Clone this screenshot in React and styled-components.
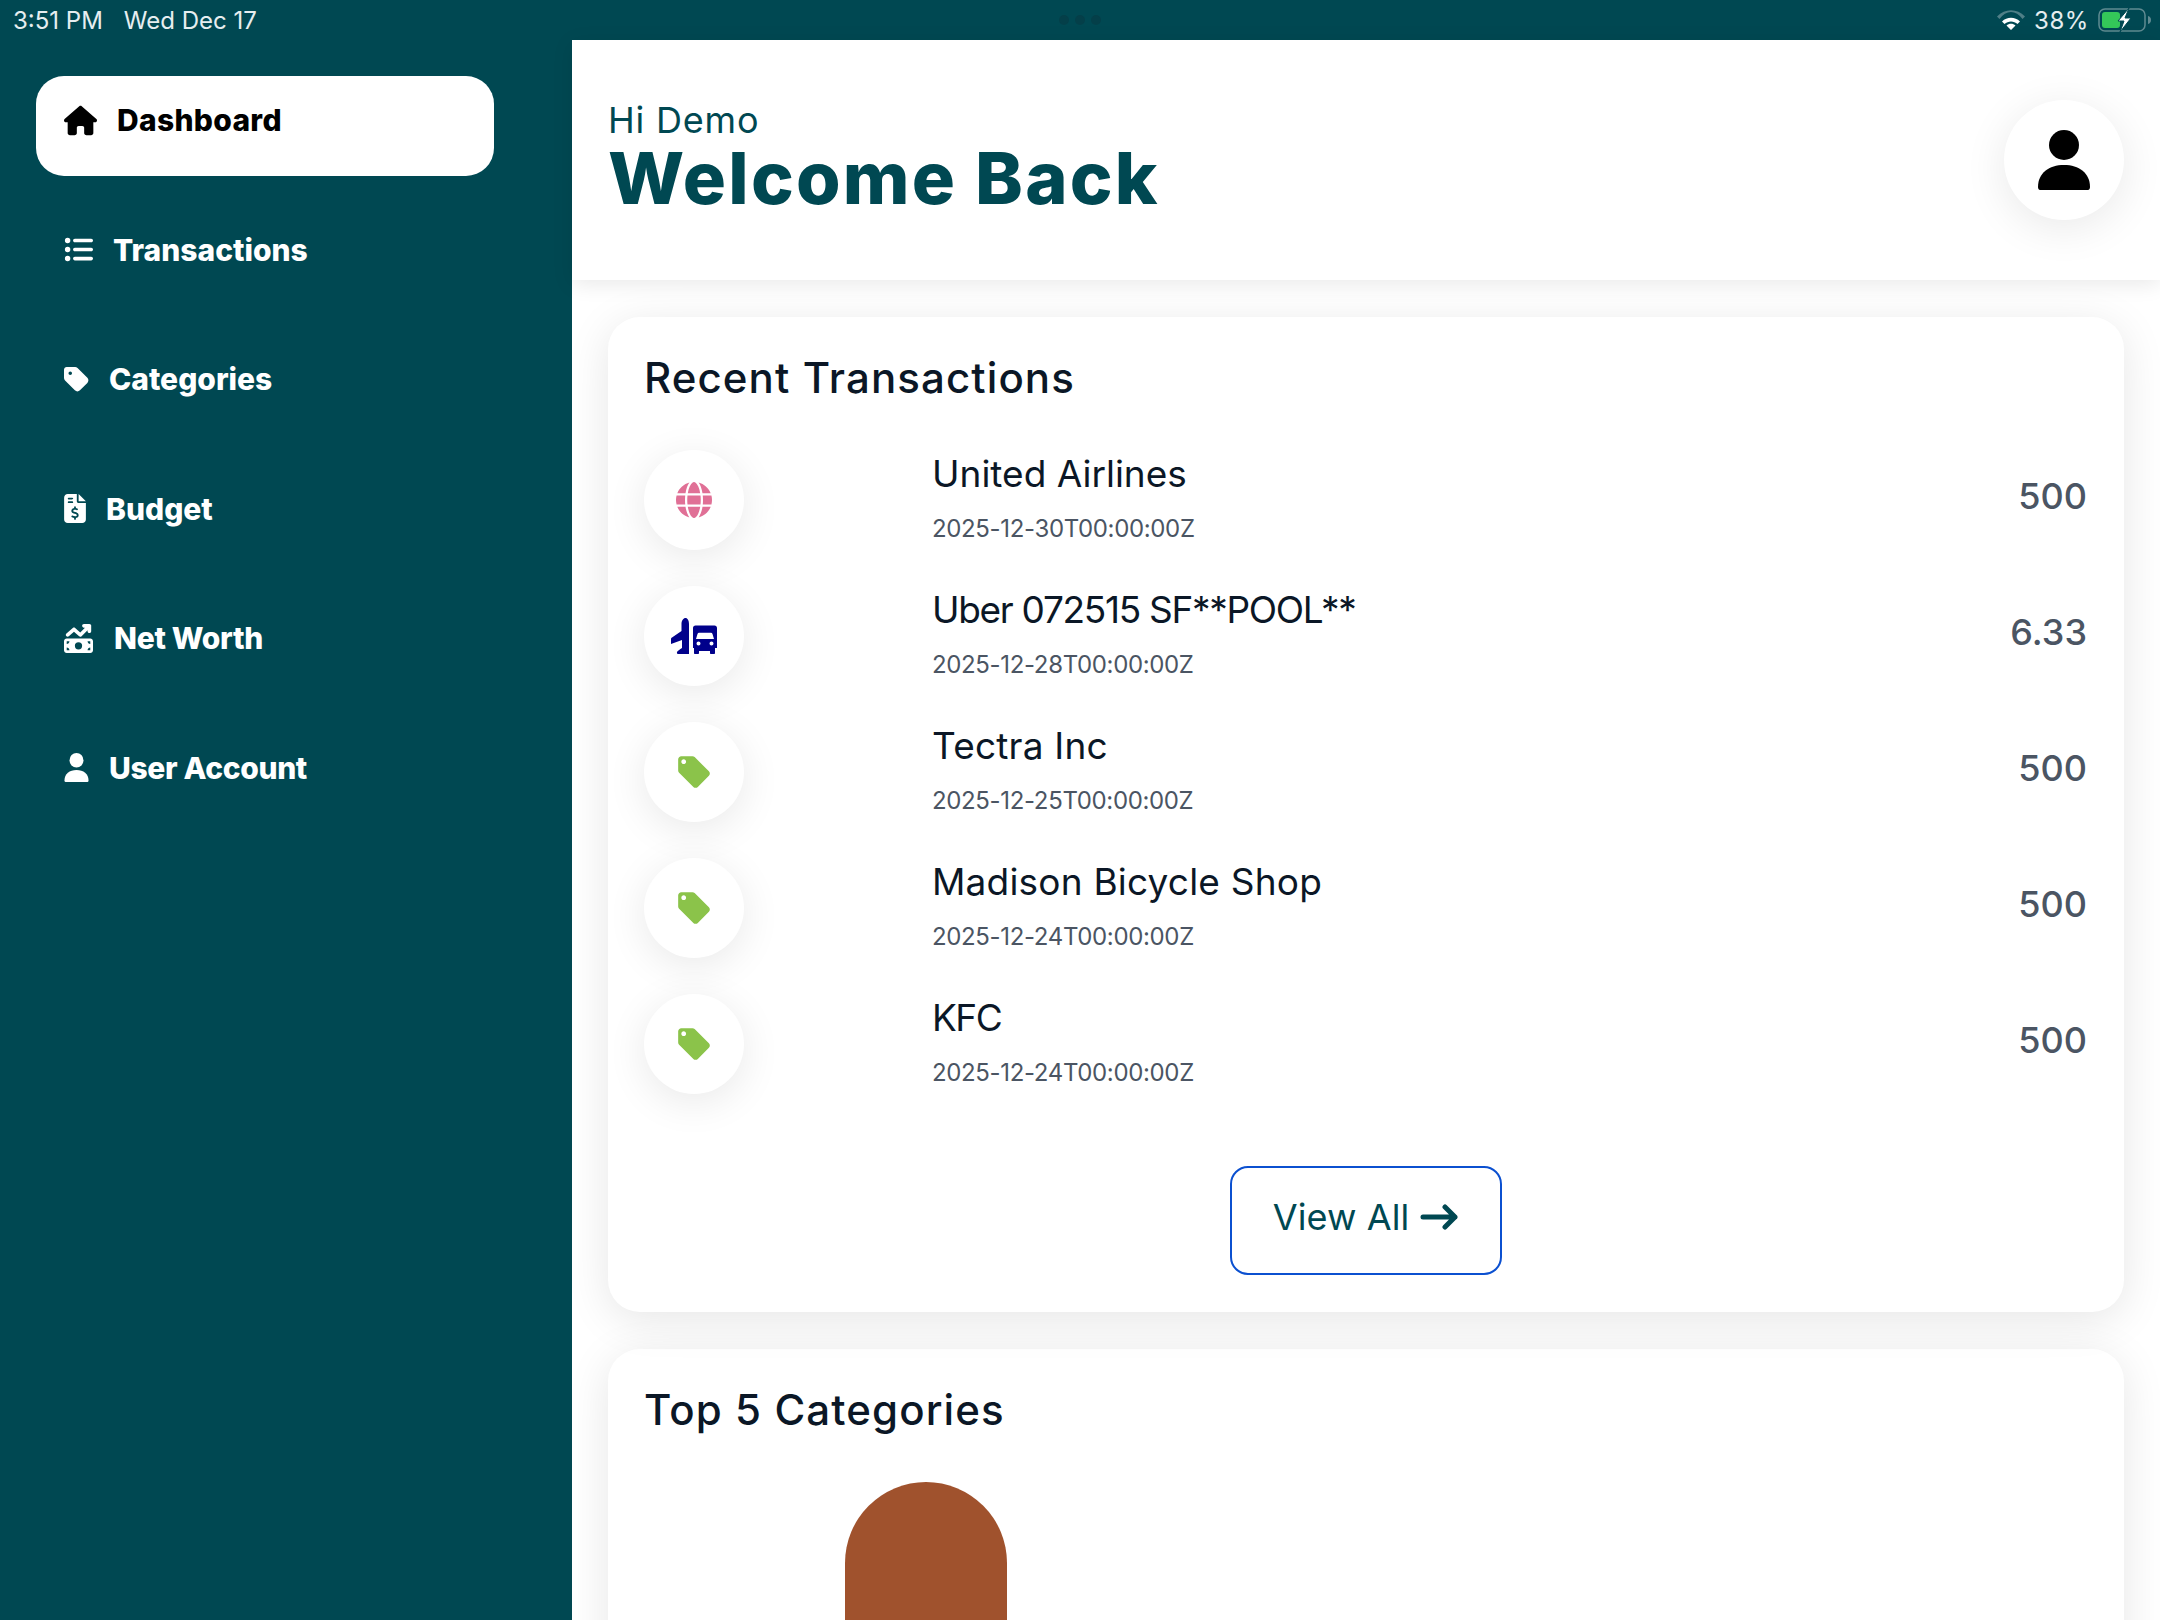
import React from "react";
import styled, { createGlobalStyle } from "styled-components";
import { FaHouse, FaListUl, FaTag, FaFileInvoiceDollar, FaMoneyBillTrendUp, FaGlobe } from "react-icons/fa6";
import { MdLocalOffer } from "react-icons/md";

const Global = createGlobalStyle`
  html, body { margin: 0; padding: 0; background: #fff; }
  * { box-sizing: border-box; }
`;
const font = `Inter, "Liberation Sans", sans-serif`;
const teal = "#004852";

const Screen = styled.div`
  width: 2160px; height: 1620px; overflow: hidden; display: flex; flex-direction: column;
  font-family: ${font}; background: #fff;
`;
const StatusBar = styled.div`
  height: 40px; flex: none; background: ${teal}; color: #e6eef0; display: flex; align-items: center;
  justify-content: space-between; padding: 0 8px 0 13px; font-size: 24px; position: relative;
`;
const StatusLeft = styled.div` display: flex; gap: 21px; letter-spacing: 0; `;
const StatusRight = styled.div` display: flex; align-items: center; gap: 9px; letter-spacing: .6px; `;
const Dots = styled.div`
  position: absolute; left: 1059px; top: 15px; display: flex; gap: 6px;
`;
const Dot = styled.span` width: 10px; height: 10px; border-radius: 50%; background: #043f49; `;
const Body = styled.div` flex: 1; display: flex; min-height: 0; `;
const Sidebar = styled.nav`
  width: 572px; flex: none; background: ${teal}; padding: 36px 78px 0 36px;
  display: flex; flex-direction: column; gap: 29.6px;
`;
const NavItem = styled.div`
  height: 100px; border-radius: 28px; padding: 0 0 12px 28px; display: flex; align-items: center; gap: ${p => p.$gap || "20px"};
  background: ${p => (p.$active ? "#fff" : "transparent")};
  color: ${p => (p.$active ? "#000" : "#fff")};
  svg { display: block; flex: none; }
`;
const NavLabel = styled.span`
  font-size: 30px; font-weight: 800; line-height: 32px; letter-spacing: ${p => p.$ls || "0"};
`;
const Main = styled.main` flex: 1; min-width: 0; display: flex; flex-direction: column; `;
const Header = styled.header`
  height: 240px; flex: none; background: #fff; box-shadow: 0 4px 20px rgba(0,0,0,.09);
  display: flex; align-items: center; justify-content: space-between; padding: 0 36px; position: relative; z-index: 2;
`;
const Titles = styled.div` display: flex; flex-direction: column; margin-top: -8px; `;
const Hi = styled.div` font-size: 36px; line-height: 44px; color: ${teal}; letter-spacing: .8px; `;
const Welcome = styled.h1`
  margin: 0; font-size: 72px; line-height: 72px; font-weight: 800; color: ${teal}; letter-spacing: 2.2px;
`;
const Avatar = styled.div`
  width: 120px; height: 120px; border-radius: 50%; background: #fff;
  box-shadow: 0 8px 44px rgba(0,0,0,.09); display: flex; align-items: center; justify-content: center;
`;
const Content = styled.div`
  flex: 1; min-height: 0; padding: 37px 36px 0; display: flex; flex-direction: column; gap: 37px;
`;
const Card = styled.section`
  background: #fff; border-radius: 32px; padding: 37px 37px 37px 36px; position: relative; flex: none;
  z-index: ${p => p.$z || 0};
  box-shadow: 0 8px 44px rgba(0,0,0,.1);
`;
const CardTitle = styled.h2`
  margin: 0; font-size: 42px; line-height: 48px; font-weight: 500; color: #0b1726; letter-spacing: 1.1px;
`;
const Rows = styled.div` margin-top: 48px; display: flex; flex-direction: column; `;
const Row = styled.div`
  height: 136px; display: grid; grid-template-columns: 288px 1fr auto; align-items: start;
`;
const IconCircle = styled.div`
  width: 100px; height: 100px; border-radius: 50%; background: #fff;
  box-shadow: 0 8px 40px rgba(0,0,0,.09); display: flex; align-items: center; justify-content: center;
`;
const RowText = styled.div` display: flex; flex-direction: column; `;
const Name = styled.div`
  font-size: 37px; line-height: 48px; color: #0b1726; letter-spacing: ${p => p.$ls || "0"};
`;
const DateText = styled.div` font-size: 24px; line-height: 30px; margin-top: 16px; color: #4b5563; letter-spacing: -.35px; `;
const Amount = styled.div` font-size: 36px; line-height: 46px; color: #4b5563; font-weight: 500; margin-top: 23px; `;
const ActionRow = styled.div` display: flex; justify-content: center; margin-top: 36px; `;
const ViewAll = styled.button`
  width: 272px; height: 109px; border: 2px solid #0b50d0; border-radius: 18px; background: #fff; color: ${teal};
  font-family: ${font}; font-size: 36px; display: flex; align-items: flex-start; justify-content: center; gap: 11px; padding: 25px 0 0;
  line-height: 48px; letter-spacing: .1px;
`;
const ArrowIcon = styled.svg` margin-top: 11px; flex: none; `;
const BarWrap = styled.div` margin-top: 48px; padding-left: 201px; `;
const Bar = styled.div`
  width: 162px; height: 300px; background: #a0522d; border-radius: 81px 81px 0 0;
`;

const Person = ({ w, h, color }) => (
  <svg width={w} height={h} viewBox="0 0 54 60" fill={color} preserveAspectRatio="none">
    <circle cx="27" cy="15" r="15" />
    <path d="M1 57c0-14 11-22 26-22s26 8 26 22c0 2-1 3-2 3H3c-1 0-2-1-2-3z" />
  </svg>
);
const PlaneBus = () => (
  <svg width="46" height="36" viewBox="0 0 46 36" fill="#00008b">
    <path d="M14.500 0c2 0 3.500 2.500 3.500 6v30h-3l-8 0c-1 0-1.200-.8-1-2 .2-1 3-2.500 5-4v-8L0 26v-5c0-.8.3-1.200 1-1.600L10.500 13V6c0-3.500 2-6 4-6z" />
    <path fillRule="evenodd" d="M22 10c0-1.500 1-2.500 2.500-2.500h19c1.500 0 2.500 1 2.500 2.500v20h-2v5c0 .6-.4 1-1 1h-3c-.6 0-1-.4-1-1v-2H28v2c0 .6-.4 1-1 1h-3c-.6 0-1-.4-1-1v-5h-1zM25 21h18l-1.500-5c-.3-.8-.8-1.200-1.500-1.200H28c-.7 0-1.200.4-1.500 1.200zM27.500 23.500a2 2 0 1 0 0 4 2 2 0 0 0 0-4zM40.500 23.500a2 2 0 1 0 0 4 2 2 0 0 0 0-4z" />
  </svg>
);
const Wifi = () => (
  <svg width="28" height="20" viewBox="0 0 28 20">
    <path d="M0 6.500C8-1.800 20-1.800 28 6.500l-2.500 2.600C19-.5 9-.5 2.500 9.100z" fill="#4f7f87" />
    <path d="M5 11.500c5-5 13-5 18 0l-2.500 2.500c-3.600-3.500-9.400-3.500-13 0zM9.500 15.500c2.500-2.300 6.500-2.300 9 0L14 20z" fill="#fff" />
  </svg>
);
const Battery = () => (
  <svg width="54" height="24" viewBox="0 0 54 24">
    <rect x="1" y="1" width="46" height="22" rx="6" fill="none" stroke="#5f8a91" strokeWidth="1.500" />
    <rect x="4" y="4" width="18" height="16" rx="3" fill="#34c759" />
    <path d="M50 8c2 .5 3 2 3 4s-1 3.500-3 4z" fill="#5f8a91" />
    <path d="M31 0L20 13h6l-4 11L33 10h-6z" fill="#fff" stroke={teal} strokeWidth="1" />
  </svg>
);
const Arrow = () => (
  <ArrowIcon width="38" height="26" viewBox="0 0 38 26" fill="none" stroke={teal} strokeWidth="5" strokeLinecap="round" strokeLinejoin="round">
    <path d="M3 13h32M25 3l10 10-10 10" />
  </ArrowIcon>
);

const nav = [
  { label: "Dashboard", icon: <FaHouse size={33} />, active: true, ls: ".3px" },
  { label: "Transactions", icon: <FaListUl size={29} /> },
  { label: "Categories", icon: <FaTag size={29} style={{ width: 25 }} /> },
  { label: "Budget", icon: <FaFileInvoiceDollar size={29} style={{ width: 22 }} /> },
  { label: "Net Worth", icon: <FaMoneyBillTrendUp size={29} />, ls: "-.3px", gap: "21px" },
  { label: "User Account", icon: <Person w={25} h={29} color="#fff" />, ls: "-.35px" },
];
const tag = <MdLocalOffer size={38} color="#8bc34a" />;
const rows = [
  { name: "United Airlines", date: "2025-12-30T00:00:00Z", amount: "500", icon: <FaGlobe size={36} color="#e07096" /> },
  { name: "Uber 072515 SF**POOL**", date: "2025-12-28T00:00:00Z", amount: "6.33", icon: <PlaneBus />, ls: "-1.3px" },
  { name: "Tectra Inc", date: "2025-12-25T00:00:00Z", amount: "500", icon: tag, ls: ".2px" },
  { name: "Madison Bicycle Shop", date: "2025-12-24T00:00:00Z", amount: "500", icon: tag, ls: ".2px" },
  { name: "KFC", date: "2025-12-24T00:00:00Z", amount: "500", icon: tag, ls: "-1.5px" },
];

export default function App() {
  return (
    <Screen>
      <Global />
      <StatusBar>
        <StatusLeft><span>3:51 PM</span><span>Wed Dec 17</span></StatusLeft>
        <Dots><Dot /><Dot /><Dot /></Dots>
        <StatusRight><Wifi /><span>38%</span><Battery /></StatusRight>
      </StatusBar>
      <Body>
        <Sidebar>
          {nav.map(n => (
            <NavItem key={n.label} $active={n.active} $gap={n.gap}>
              {n.icon}
              <NavLabel $ls={n.ls}>{n.label}</NavLabel>
            </NavItem>
          ))}
        </Sidebar>
        <Main>
          <Header>
            <Titles>
              <Hi>Hi Demo</Hi>
              <Welcome>Welcome Back</Welcome>
            </Titles>
            <Avatar><Person w={54} h={60} color="#000" /></Avatar>
          </Header>
          <Content>
            <Card $z={1}>
              <CardTitle>Recent Transactions</CardTitle>
              <Rows>
                {rows.map((r, i) => (
                  <Row key={i}>
                    <IconCircle>{r.icon}</IconCircle>
                    <RowText>
                      <Name $ls={r.ls}>{r.name}</Name>
                      <DateText>{r.date}</DateText>
                    </RowText>
                    <Amount>{r.amount}</Amount>
                  </Row>
                ))}
              </Rows>
              <ActionRow>
                <ViewAll>View All <Arrow /></ViewAll>
              </ActionRow>
            </Card>
            <Card>
              <CardTitle>Top 5 Categories</CardTitle>
              <BarWrap><Bar /></BarWrap>
            </Card>
          </Content>
        </Main>
      </Body>
    </Screen>
  );
}
